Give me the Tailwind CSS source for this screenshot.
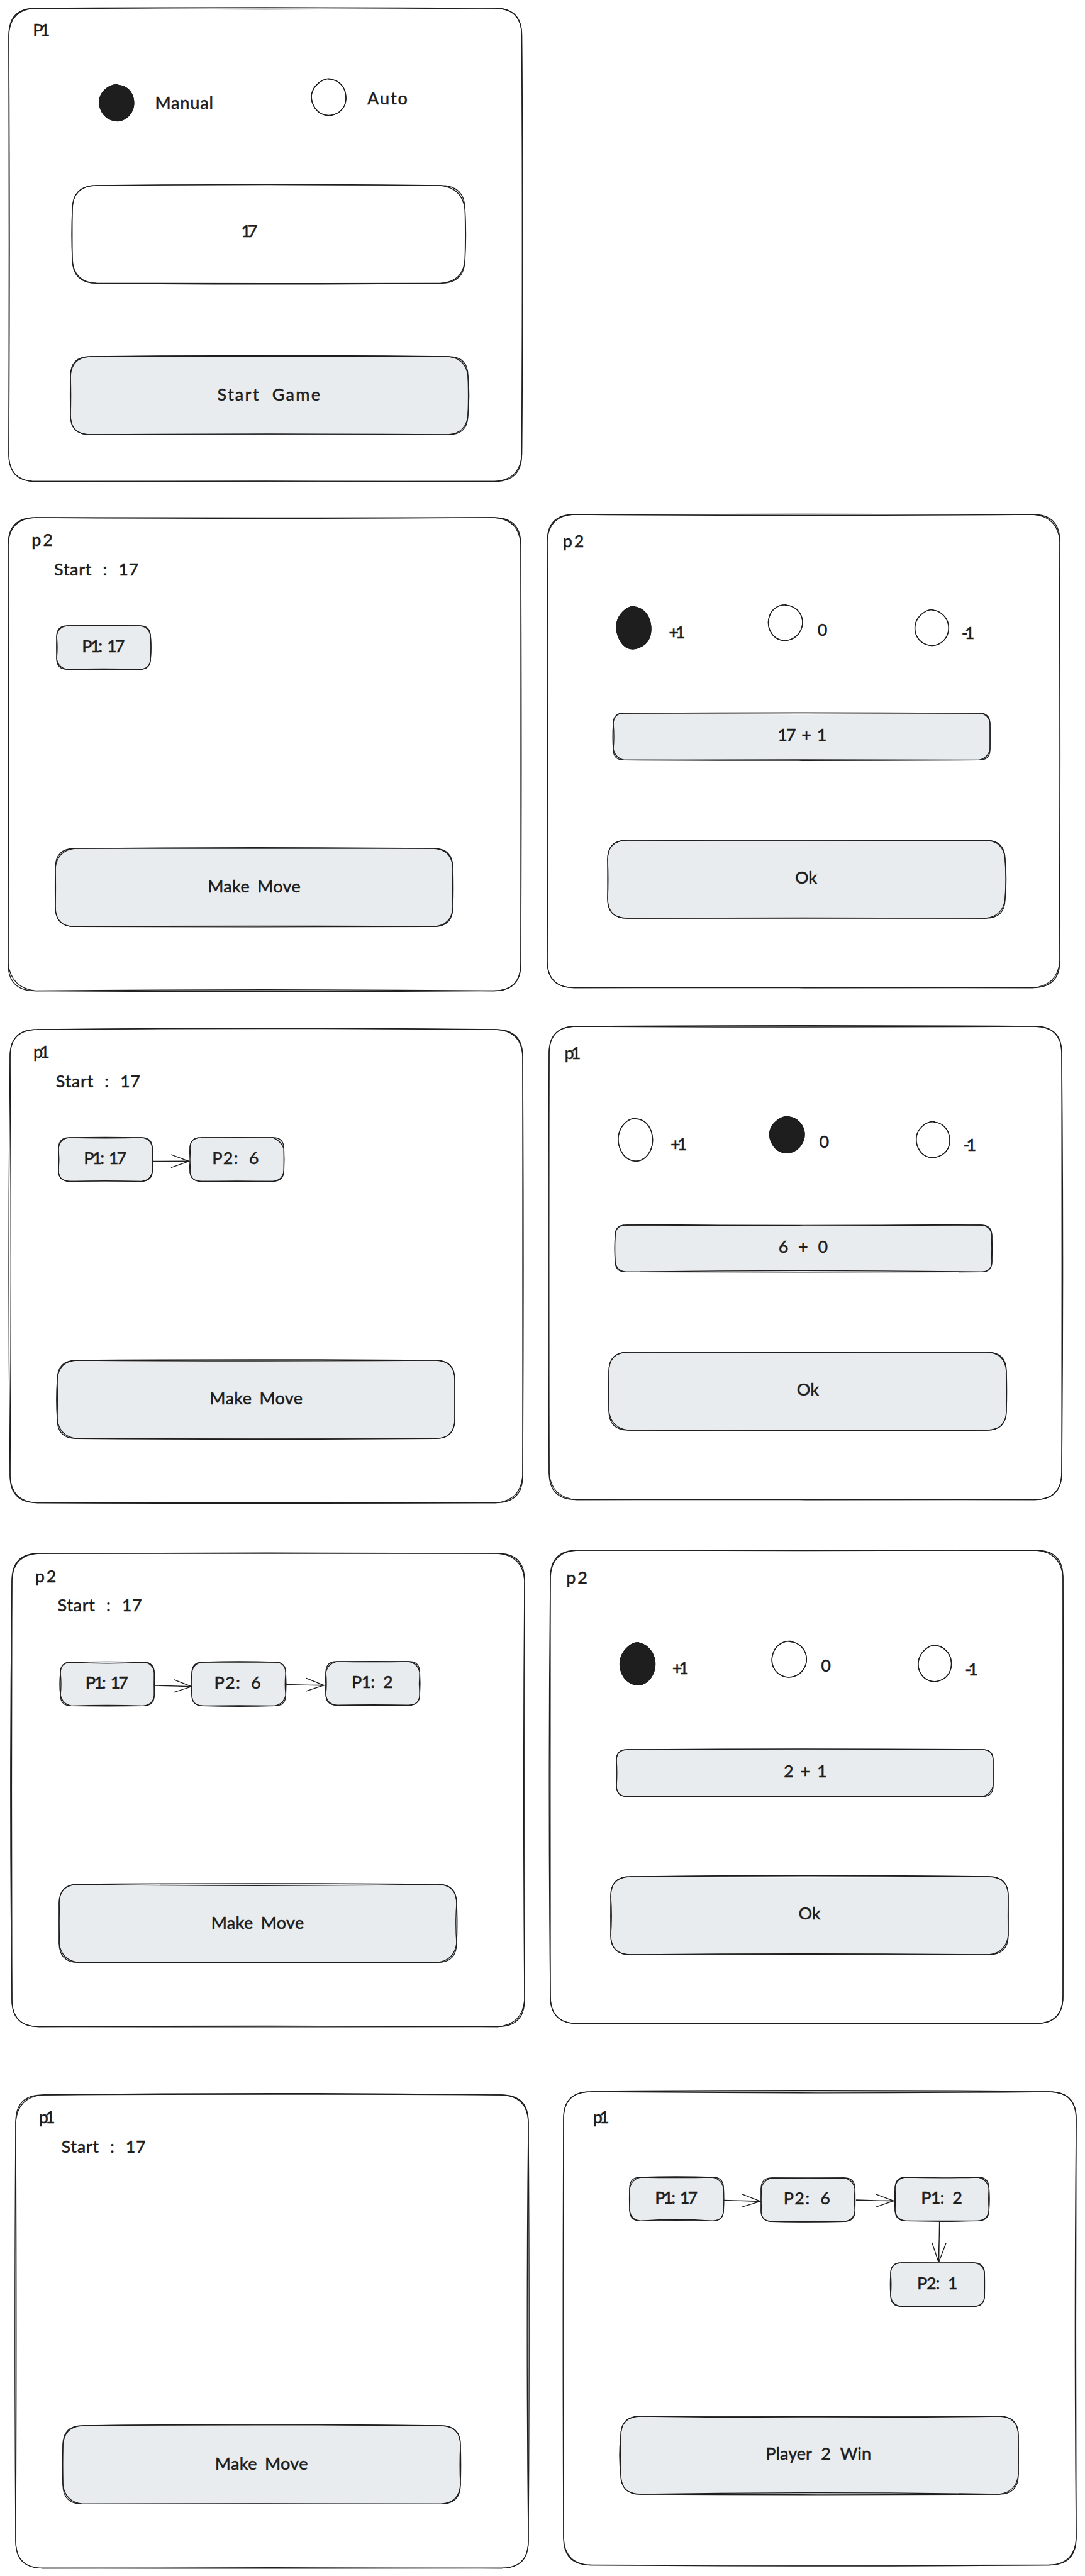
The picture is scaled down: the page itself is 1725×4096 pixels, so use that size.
<!DOCTYPE html>
<html lang="en">
<head>
<meta charset="utf-8">
<title>Game wireframe</title>
<script src="https://cdn.jsdelivr.net/npm/@tailwindcss/browser@4"></script>
</head>
<body class="w-[1725px] h-[4096px] overflow-hidden bg-white text-[#1e1e1e] text-[27px] leading-[34px] font-medium whitespace-nowrap [-webkit-text-stroke:.4px] [font-family:Excalifont,Lato,sans-serif]">
<main class="flex flex-col">

  <!-- Setup -->
  <div class="flex mt-[13px] ml-[13.8px]">
    <section data-box="43|1,-1.5,1.6,.8,-.5,.5,-1,-.4|1,0,1.5,0" class="relative isolate w-[815.5px] h-[752.5px] flex flex-col items-start">
      <h2 class="mt-[17px] ml-[38.5px] tracking-[-5px]">P1</h2>
      <div class="mt-[62.4px] h-[168.3px] flex items-start">
        <span data-oval="2|on" class="relative isolate ml-[144.4px] mt-[8.5px] w-[55px] h-[57.4px]"></span>
        <span class="ml-[33.3px] mt-[20px] w-[100px] tracking-[.8px]">Manual</span>
        <span data-oval="5" class="relative isolate ml-[148.9px] w-[55px] h-[58px]"></span>
        <span class="ml-[33.7px] mt-[12.5px] tracking-[1.9px]">Auto</span>
      </div>
      <div data-box="38.6|1.6,-.4,1.2,.4,.4,1.6,1,.2|0,2.5,1.5,1" class="relative isolate ml-[101.4px] w-[624.3px] h-[155.3px] pt-[55.5px] pl-[268px]"><span class="tracking-[-5px]">17</span></div>
      <button data-box="31|1.6,.8,.6,1.6,-1,.2,-.6,.4|1,2,1.6,0|#e9ecef" class="relative isolate ml-[98.6px] mt-[116.8px] w-[632px] h-[124px] flex items-center justify-center pb-1"><span class="tracking-[2.2px] [word-spacing:10px]">Start Game</span></button>
    </section>
  </div>

  <!-- Round 1 -->
  <div class="flex items-start gap-[41.5px] mt-[52px] ml-[13.2px]">
    <section data-box="43|-.5,-1.5,0,.8,-1.8,1.2,.2,-.6|1,1.5,0,3" class="relative isolate mt-[5px] w-[815px] h-[752.5px] flex flex-col items-start">
      <h2 class="mt-[18.6px] ml-[37px] tracking-[3px]">p2</h2>
      <p class="mt-[12.9px] ml-[72.8px] tracking-[.6px] [word-spacing:10px]">Start : 17</p>
      <div class="mt-[73.3px] ml-[77px] h-[353.6px] flex items-start">
        <div data-box="17.3|.6,0,.6,.8,0,-1,.2,-1|1,1,0,1.5|#e9ecef" class="relative isolate w-[149.3px] h-[69.4px] flex items-center justify-center pb-[5px]"><span class="mr-1 tracking-[-3px] [word-spacing:6px]">P1: 17</span></div>
      </div>
      <button data-box="31|1.3,0,.6,-.6,-1,.4,-.4,.4|2,1,1,0|#e9ecef" class="relative isolate ml-[75px] w-[632px] h-[124.4px] flex items-center justify-center pb-1"><span class="tracking-[.3px] [word-spacing:5px]">Make Move</span></button>
    </section>
    <section data-box="43|.5,-1.5,-1,.4,-.8,.2,-.4,-1.2|1,2,2,0" class="relative isolate w-[815px] h-[752.5px] flex flex-col items-start">
      <h2 class="mt-[25.6px] ml-[25px] tracking-[3px]">p2</h2>
      <div class="mt-[85.2px] h-[171.8px] flex items-start">
        <span data-oval="3|on" class="relative isolate ml-[110.8px] mt-[2.5px] w-[55px] h-[67px]"></span>
        <span class="ml-[27.7px] mt-[25.6px] w-[40px] tracking-[-5px]">+1</span>
        <span data-oval="7" class="relative isolate ml-[118px] w-[55px] h-[56.4px]"></span>
        <span class="ml-[23.5px] mt-[21.6px] w-[30px]">0</span>
        <span data-oval="4" class="relative isolate ml-[125px] mt-[7.5px] w-[53px] h-[57px]"></span>
        <span class="ml-[21px] mt-[27px] tracking-[-5px]">-1</span>
      </div>
      <div data-box="17|.8,.4,0,.2,-.6,.8,.8,-1|0,1,2,2|#e9ecef|4" class="relative isolate ml-[105.2px] w-[599px] h-[74.4px] flex items-center justify-center pb-[6px]"><span class="tracking-[-2px] [word-spacing:6px]">17 + 1</span></div>
      <button data-box="31|0,-1,1,1.6,-.6,0,-.8,0|0,1,2,0|#e9ecef" class="relative isolate ml-[95.9px] mt-[127.9px] w-[632px] h-[124px] flex items-center justify-center pb-[7px]">Ok</button>
    </section>
  </div>

  <!-- Round 2 -->
  <div class="flex items-start gap-[41.5px] mt-[56.5px] ml-[16px]">
    <section data-box="43|2,1.4,0,1,0,1,2,-1.3|0,1,2,1" class="relative isolate mt-[5px] w-[815px] h-[752.5px] flex flex-col items-start">
      <h2 class="mt-[18.6px] ml-[37px] tracking-[-5px]">p1</h2>
      <p class="mt-[12.9px] ml-[72.8px] tracking-[.6px] [word-spacing:10px]">Start : 17</p>
      <div class="mt-[73.3px] ml-[77px] h-[353.6px] flex items-start">
        <div data-box="17.3|.6,-.8,.2,.6,-.6,1,-.8,.2|1,1,1,0|#e9ecef" class="relative isolate w-[149.3px] h-[69.4px] flex items-center justify-center pb-[5px]"><span class="mr-1 tracking-[-3px] [word-spacing:6px]">P1: 17</span></div>
        <svg class="w-[59.5px] h-[69px] overflow-visible" viewBox="0 0 59.5 69" fill="none" stroke="#1e1e1e" stroke-width="1.35" stroke-linecap="round"><path d="M.5 37.5 58.5 37.2M.5 37.3 58.5 37.8M30.5 27.2 58.5 37.5 30.5 47.3"/></svg>
        <div data-box="17.3|.4,-.4,0,.5,.4,-.5,1,-1|0,3,1,0|#e9ecef" class="relative isolate w-[149.3px] h-[69.4px] flex items-center justify-center pb-[5px]"><span class="mr-[3px] tracking-[1.2px] [word-spacing:8px]">P2: 6</span></div>
      </div>
      <button data-box="31|1.2,-1,0,0,-.4,1,1.2,-.4|1,0,0,2|#e9ecef" class="relative isolate ml-[75.3px] w-[632px] h-[124.4px] flex items-center justify-center pb-1"><span class="tracking-[.3px] [word-spacing:5px]">Make Move</span></button>
    </section>
    <section data-box="43|1.4,-1,1.6,.3,-.8,.2,1.2,.2|0,0,0,2" class="relative isolate w-[815px] h-[752.5px] flex flex-col items-start">
      <h2 class="mt-[25.6px] ml-[25px] tracking-[-5px]">p1</h2>
      <div class="mt-[85.2px] h-[171.8px] flex items-start">
        <span data-oval="6" class="relative isolate ml-[110.8px] mt-[2.5px] w-[54.5px] h-[67px]"></span>
        <span class="ml-[28.2px] mt-[25.6px] w-[40px] tracking-[-5px]">+1</span>
        <span data-oval="9|on" class="relative isolate ml-[118px] w-[55px] h-[57px]"></span>
        <span class="ml-[23.5px] mt-[21.6px] w-[30px]">0</span>
        <span data-oval="8" class="relative isolate ml-[125px] mt-[7.5px] w-[53px] h-[57px]"></span>
        <span class="ml-[21px] mt-[27px] tracking-[-5px]">-1</span>
      </div>
      <div data-box="17|1.4,-.8,-.8,.4,-2,.4,.8,.4|0,1,0,1|#e9ecef" class="relative isolate ml-[105.2px] w-[599px] h-[74.4px] flex items-center justify-center pb-[6px]"><span class="tracking-[.5px] [word-spacing:8px]">6 + 0</span></div>
      <button data-box="31|.2,-.3,.6,-.2,.4,1,0,.3|0,1,0,2|#e9ecef" class="relative isolate ml-[95.9px] mt-[127.9px] w-[632px] h-[124px] flex items-center justify-center pb-[7px]">Ok</button>
    </section>
  </div>

  <!-- Round 3 -->
  <div class="flex items-start gap-[41.5px] mt-[76px] ml-[18.7px]">
    <section data-box="43|.8,0,-1.4,-.2,-1,.4,2.2,.6|1,2,2,0" class="relative isolate mt-[5px] w-[815px] h-[752.5px] flex flex-col items-start">
      <h2 class="mt-[18.6px] ml-[37px] tracking-[3px]">p2</h2>
      <p class="mt-[12.9px] ml-[72.8px] tracking-[.6px] [word-spacing:10px]">Start : 17</p>
      <div class="mt-[73.3px] ml-[77px] h-[353.6px] flex items-start">
        <div data-box="17.3|.6,-1.8,-.4,.4,-1,.4,-1,1|0,1,1,2|#e9ecef" class="relative isolate w-[149.3px] h-[69.4px] flex items-center justify-center pb-[5px]"><span class="mr-1 tracking-[-3px] [word-spacing:6px]">P1: 17</span></div>
        <svg class="w-[60px] h-[69px] overflow-visible" viewBox="0 0 60 69" fill="none" stroke="#1e1e1e" stroke-width="1.35" stroke-linecap="round"><path d="M.5 37 59 38.6M.5 36.8 59 38.9M32 27.8 59.5 38.8 32 47.6"/></svg>
        <div data-box="17.3|1,0,-1,.6,1,-.4,0,1|1,0,2,0|#e9ecef" class="relative isolate w-[149.3px] h-[69.4px] flex items-center justify-center pb-[5px]"><span class="mr-[3px] tracking-[1.2px] [word-spacing:8px]">P2: 6</span></div>
        <svg class="w-[63.5px] h-[69px] overflow-visible" viewBox="0 0 63.5 69" fill="none" stroke="#1e1e1e" stroke-width="1.35" stroke-linecap="round"><path d="M.5 35.5 61 37M.5 36 61 36.4M33 25.5 61 36.7 33 45.8"/></svg>
        <div data-box="17.3|.4,-.6,.6,-.8,0,-.6,-1,.8|2,2,0,1|#e9ecef" class="relative isolate mt-[-1px] w-[149.3px] h-[69.4px] flex items-center justify-center pb-[5px]"><span class="mr-[2px] tracking-[-.9px] [word-spacing:8px]">P1: 2</span></div>
      </div>
      <button data-box="31|1.2,-2.2,-1.2,.8,.2,1,-1,.2|0,0,2,2|#e9ecef" class="relative isolate ml-[75px] w-[632px] h-[124.4px] flex items-center justify-center pb-1"><span class="tracking-[.3px] [word-spacing:5px]">Make Move</span></button>
    </section>
    <section data-box="43|-.2,-.6,.8,-.2,-.8,.2,1.8,.2|1,2,0,0" class="relative isolate w-[815px] h-[752.5px] flex flex-col items-start">
      <h2 class="mt-[25.6px] ml-[25px] tracking-[3px]">p2</h2>
      <div class="mt-[85.2px] h-[171.8px] flex items-start">
        <span data-oval="11|on" class="relative isolate ml-[110.8px] mt-[3px] w-[55px] h-[66px]"></span>
        <span class="ml-[27.7px] mt-[25.6px] w-[40px] tracking-[-5px]">+1</span>
        <span data-oval="12" class="relative isolate ml-[118px] w-[55px] h-[56.8px]"></span>
        <span class="ml-[23.5px] mt-[21.6px] w-[30px]">0</span>
        <span data-oval="13" class="relative isolate ml-[125px] mt-[7.5px] w-[53px] h-[57px]"></span>
        <span class="ml-[21px] mt-[27px] tracking-[-5px]">-1</span>
      </div>
      <div data-box="17|1,-.4,.2,-.2,-.4,-.2,-.8,.2|0,0,2,0|#e9ecef" class="relative isolate ml-[105.2px] w-[599px] h-[74.4px] flex items-center justify-center pb-[6px]"><span class="tracking-[-1px] [word-spacing:6px]">2 + 1</span></div>
      <button data-box="31|1.8,1.2,.2,-.4,-1.4,-.4,-1.2,.2|0,0,2,0|#e9ecef|3" class="relative isolate ml-[95.9px] mt-[127.9px] w-[632px] h-[124px] flex items-center justify-center pb-[7px]">Ok</button>
    </section>
  </div>

  <!-- Result -->
  <div class="flex items-start gap-[56.5px] mt-[103px] ml-[24.8px]">
    <section data-box="43|2.4,1,-1.8,1.2,-.8,.4,1.2,-.8|2,1,0,0" class="relative isolate mt-[5px] w-[815px] h-[752.5px] flex flex-col items-start">
      <h2 class="mt-[18.6px] ml-[37px] tracking-[-5px]">p1</h2>
      <p class="mt-[12.9px] ml-[72.8px] tracking-[.6px] [word-spacing:10px]">Start : 17</p>
      <button data-box="31|2,1.2,-.8,.6,-.4,0,.6,.2|1,0,1,2|#e9ecef" class="relative isolate mt-[426.9px] ml-[75px] w-[632px] h-[124.4px] flex items-center justify-center pb-1"><span class="tracking-[.3px] [word-spacing:5px]">Make Move</span></button>
    </section>
    <section data-box="43|1.4,-1.8,-1.6,-.6,.6,1.6,.8,-.2|0,0,1,1" class="relative isolate w-[815px] h-[752.5px] flex flex-col items-start">
      <h2 class="mt-[23.8px] ml-[46.5px] tracking-[-5px]">p1</h2>
      <div class="mt-[79px] ml-[104.7px] h-[69.4px] flex items-start">
        <div data-box="17.3|1,-.6,-.4,.6,-2.2,-.6,.4,-.4|2,2,0,1|#e9ecef" class="relative isolate w-[149.3px] h-[69.4px] flex items-center justify-center pb-[5px]"><span class="mr-1 tracking-[-3px] [word-spacing:6px]">P1: 17</span></div>
        <svg class="w-[60px] h-[69px] overflow-visible" viewBox="0 0 60 69" fill="none" stroke="#1e1e1e" stroke-width="1.35" stroke-linecap="round"><path d="M1 36.6 59 38M1 36.4 59 38.5M30.5 27.2 59 38.2 30 47.2"/></svg>
        <div data-box="17.3|0,-.8,-.8,.2,.6,.2,.2,-1|2,2,1,0|#e9ecef" class="relative isolate mt-[1px] w-[149.3px] h-[69.4px] flex items-center justify-center pb-[5px]"><span class="mr-[3px] tracking-[1.2px] [word-spacing:8px]">P2: 6</span></div>
        <svg class="w-[63.5px] h-[69px] overflow-visible" viewBox="0 0 63.5 69" fill="none" stroke="#1e1e1e" stroke-width="1.35" stroke-linecap="round"><path d="M1.5 36 61 37.8M1.5 36.6 61 37.2M33 27.2 61 37.5 33 47.2"/></svg>
        <div data-box="17.3|-.8,.4,-.6,.8,.8,0,-.6,.6|1,2,1,1|#e9ecef" class="relative isolate w-[149.3px] h-[69.4px] flex items-center justify-center pb-[5px]"><span class="mr-[2px] tracking-[-.9px] [word-spacing:8px]">P1: 2</span></div>
      </div>
      <div class="ml-[520.1px] w-[149.3px] flex flex-col">
        <svg class="ml-[63px] w-[28px] h-[66px] overflow-visible" viewBox="0 0 28 66" fill="none" stroke="#1e1e1e" stroke-width="1.35" stroke-linecap="round"><path d="M15 1 13 65M14.6 1 13.6 65M3 34.5 13.3 65.5 25 34.8"/></svg>
        <div data-box="17.3|.2,-.4,-.6,.2,-.6,.4,-.8,.6|0,1,0,1|#e9ecef|-2" class="relative isolate w-[149.3px] h-[69.4px] flex items-center justify-center pb-[5px]"><span class="mr-[3px] tracking-[-1.2px] [word-spacing:8px]">P2: 1</span></div>
      </div>
      <div data-box="31|-.4,-2,0,.2,-2.4,.8,2,.6|0,0,2,0|#e9ecef" class="relative isolate ml-[90.4px] mt-[175.3px] w-[632px] h-[124px] flex items-center justify-center pb-[6px]"><span class="mr-[3px] [word-spacing:8px]">Player 2 Win</span></div>
    </section>
  </div>
</main>

<script>
const NS = 'http://www.w3.org/2000/svg', INK = '#1e1e1e';
const size = el => ['w', 'h'].map(k => +el.className.match(new RegExp('(?:^| )' + k + '-\\[([\\d.]+)px\\]'))[1]);
function layer(el) {
  const s = document.createElementNS(NS, 'svg');
  s.setAttribute('class', 'absolute inset-0 -z-10 w-full h-full overflow-visible');
  el.prepend(s);
  return s;
}
function path(svg, d, fill, stroke) {
  const p = document.createElementNS(NS, 'path');
  p.setAttribute('d', d);
  p.setAttribute('fill', fill);
  p.setAttribute('stroke', stroke);
  p.setAttribute('stroke-width', 1.35);
  p.setAttribute('stroke-linecap', 'round');
  svg.append(p);
}
// Rounded box whose edges bow outward by e = [top, right, bottom, left] and whose corners pull in by c.
function boxPath(w, h, r, e, c) {
  return `M${r} 0Q${w / 2} ${-2 * e[0]} ${w - r} 0Q${w - c[1]} ${c[1]} ${w} ${r}` +
    `Q${w + 2 * e[1]} ${h / 2} ${w} ${h - r}Q${w - c[2]} ${h - c[2]} ${w - r} ${h}` +
    `Q${w / 2} ${h + 2 * e[2]} ${r} ${h}Q${c[3]} ${h - c[3]} 0 ${h - r}` +
    `Q${-2 * e[3]} ${h / 2} 0 ${r}Q${c[0]} ${c[0]} ${r} 0`;
}
document.querySelectorAll('[data-box]').forEach(el => {
  const [r, e, c, fill, top] = el.dataset.box.split('|');
  const b = e.split(',').map(Number), k = c.split(',').map(n => n * 1.6), R = +r;
  const [w, h] = size(el), s = layer(el);
  if (fill) path(s, boxPath(w, h, R, [-(top || 0) * .6, 0, 0, 0], [1, 1, 1, 1]), fill, 'none');
  path(s, boxPath(w, h, R, [b[0], b[2], b[4], b[6]], [0, 0, 0, 0]), 'none', INK);
  path(s, boxPath(w, h, R, [b[1], b[3], b[5], b[7]], k), 'none', INK);
});
// Hand-drawn oval: a slightly uneven loop that overshoots its starting point at the top.
document.querySelectorAll('[data-oval]').forEach(el => {
  const [seed, on] = el.dataset.oval.split('|');
  const [w, h] = size(el), s = layer(el), n = 9, n0 = +seed;
  const rnd = i => { const x = Math.sin(n0 * 12.9898 + i * 78.233) * 43758.5453; return (x - Math.floor(x)) * 2 - 1; };
  const loop = k => {
    const P = [];
    for (let i = -1; i <= n + 2; i++) {
      const a = -Math.PI / 2 + .08 * k + i * 2 * Math.PI / n;
      const m = 1 + .018 * rnd((i + n) % n) + .01 * k * rnd(i + 20) + (i >= n ? .025 : 0);
      P.push([w / 2 + w / 2 * m * Math.cos(a), h / 2 + h / 2 * m * Math.sin(a)]);
    }
    let d = `M${P[1]}`;
    for (let i = 1; i < n + 1; i++) {
      const [a, b, c, e] = [P[i - 1], P[i], P[i + 1], P[i + 2]];
      d += `C${b[0] + (c[0] - a[0]) / 6} ${b[1] + (c[1] - a[1]) / 6} ${c[0] - (e[0] - b[0]) / 6} ${c[1] - (e[1] - b[1]) / 6} ${c[0]} ${c[1]}`;
    }
    return d;
  };
  path(s, loop(0), on ? INK : 'none', INK);
  path(s, loop(1), on ? INK : 'none', INK);
});
</script>
</body>
</html>
